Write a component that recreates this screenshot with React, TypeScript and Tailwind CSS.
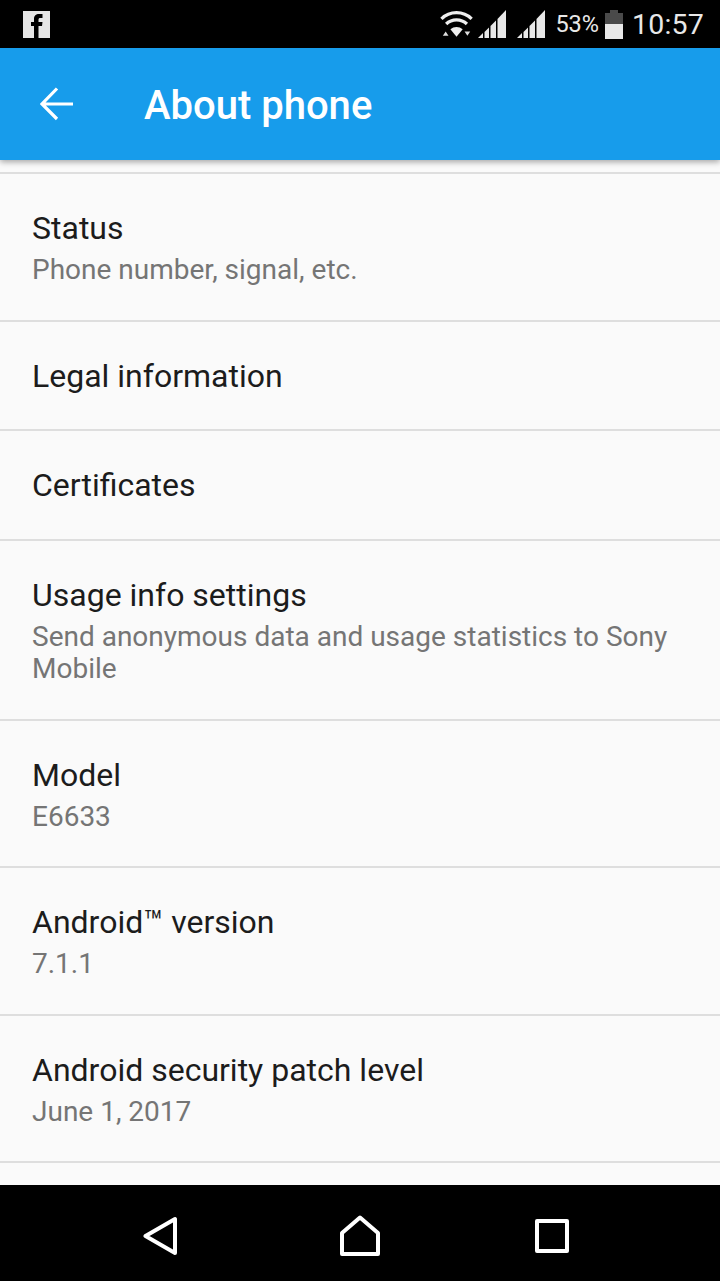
import React from 'react';

interface SettingRow {
  title: React.ReactNode;
  summary?: string;
  height: string;
}

const rows: SettingRow[] = [
  { title: 'Status', summary: 'Phone number, signal, etc.', height: 'h-[148px]' },
  { title: 'Legal information', height: 'h-[109px]' },
  { title: 'Certificates', height: 'h-[110px]' },
  { title: 'Usage info settings', summary: 'Send anonymous data and usage statistics to Sony Mobile', height: 'h-[180px]' },
  { title: 'Model', summary: 'E6633', height: 'h-[147px]' },
  { title: 'Android™ version', summary: '7.1.1', height: 'h-[148px]' },
  { title: 'Android security patch level', summary: 'June 1, 2017', height: 'h-[147px]' },
];

const SignalIcon = () => (
  <svg width="30" height="30" viewBox="0 0 30 30" fill="#e8e8e8">
    <path d="M1 29 L6 24 V29 Z" />
    <path d="M7.500 23 L12 18.500 V29 H7.500 Z" />
    <path d="M13.500 17 L19 11.500 V29 H13.500 Z" />
    <path d="M20.500 10 L29 1 V29 H20.500 Z" />
  </svg>
);

const App: React.FC = () => {
  return (
    <div className="w-[720px] h-[1281px] flex flex-col overflow-hidden bg-[#fafafa] font-['Roboto',sans-serif]">
      {/* status bar */}
      <div className="h-[48px] shrink-0 bg-black flex items-center justify-between pl-[23px] pr-[16px]">
        <svg width="27" height="27" viewBox="0 0 27 27">
          <rect width="27" height="27" fill="#e6e6e6" />
          <path d="M11 27 V15 H8 V11 H11 V8 C11 4.500 13 3 16 3 H19.500 V7 H17.500 C16 7 15.500 7.500 15.500 9 V11 H19.500 L19 15 H15.500 V27 Z" fill="#000" />
        </svg>
        <div className="flex items-center text-[#e8e8e8]">
          <svg width="34" height="29" viewBox="0 0 36 30" fill="none" className="mr-[3px] mt-[1px]">
            <path d="M1.500 9 A 23 23 0 0 1 33.500 9" stroke="#eeeeee" strokeWidth="3.500" />
            <path d="M6.500 14.500 A 16 16 0 0 1 28.500 14.500" stroke="#eeeeee" strokeWidth="3.500" />
            <path d="M11 20 A 10 10 0 0 1 24 20 L17.500 28 Z" fill="#eeeeee" />
            <path d="M3 27 L6 22.500 L9 27 Z M26 22.500 H32 L29 27 Z" fill="#dddddd" />
          </svg>
          <SignalIcon />
          <div className="w-[9px]" />
          <SignalIcon />
          <span className="ml-[9px] mt-[2px] text-[23.500px] leading-none">53%</span>
          <div className="ml-[6px] mt-[1px] w-[18px] h-[29px] flex flex-col items-center">
            <div className="w-[8px] h-[3px] bg-[#4a4a4a]" />
            <div className="w-full h-[11px] bg-[#4a4a4a]" />
            <div className="w-full h-[15px] bg-[#e8e8e8]" />
          </div>
          <span className="ml-[9px] mt-[2px] text-[28.500px] leading-none tracking-[0.2px]">10:57</span>
        </div>
      </div>

      {/* app bar */}
      <div className="relative z-10 h-[112px] shrink-0 bg-[#179ceb] shadow-[0_2px_6px_rgba(0,0,0,0.35)] flex items-center pl-[40px]">
        <svg width="34" height="34" viewBox="0 0 34 34" fill="none" stroke="#ffffff" strokeWidth="3.200">
          <path d="M33 17 H2 M17 1.500 L2 17 L17 32" />
        </svg>
        <span className="ml-[70px] mt-[4px] text-[40px] font-medium text-white leading-none">About phone</span>
      </div>

      {/* settings list */}
      <div className="flex-1 overflow-hidden pt-[12px]">
        <div className="border-b-2 border-[#dedede]" />
        {rows.map((row, i) => (
          <div
            key={i}
            className={`${row.height} border-b-2 border-[#dedede] flex flex-col justify-center pl-[32px] pr-[32px]`}
          >
            <div className="text-[32px] leading-[40px] text-[#1c1c1c]">{row.title}</div>
            {row.summary && (
              <div className="text-[28px] leading-[32px] text-[#757575] mt-[6px]">{row.summary}</div>
            )}
          </div>
        ))}
      </div>

      {/* nav bar */}
      <div className="h-[96px] shrink-0 bg-black flex items-center pl-[143px] pt-[5px]">
        <svg width="36" height="40" viewBox="0 0 36 40" fill="none" stroke="#ffffff" strokeWidth="4" strokeLinejoin="round">
          <path d="M2.500 20 L32 3 V37 Z" />
        </svg>
        <svg width="40" height="42" viewBox="0 0 40 42" fill="none" stroke="#ffffff" strokeWidth="4" strokeLinejoin="round" className="ml-[161px]">
          <path d="M20 2.500 L38 18 V39 H2 V18 Z" />
        </svg>
        <svg width="34" height="34" viewBox="0 0 34 34" fill="none" stroke="#ffffff" strokeWidth="4" strokeLinejoin="round" className="ml-[155px]">
          <rect x="2" y="2" width="30" height="30" />
        </svg>
      </div>
    </div>
  );
};

export default App;
